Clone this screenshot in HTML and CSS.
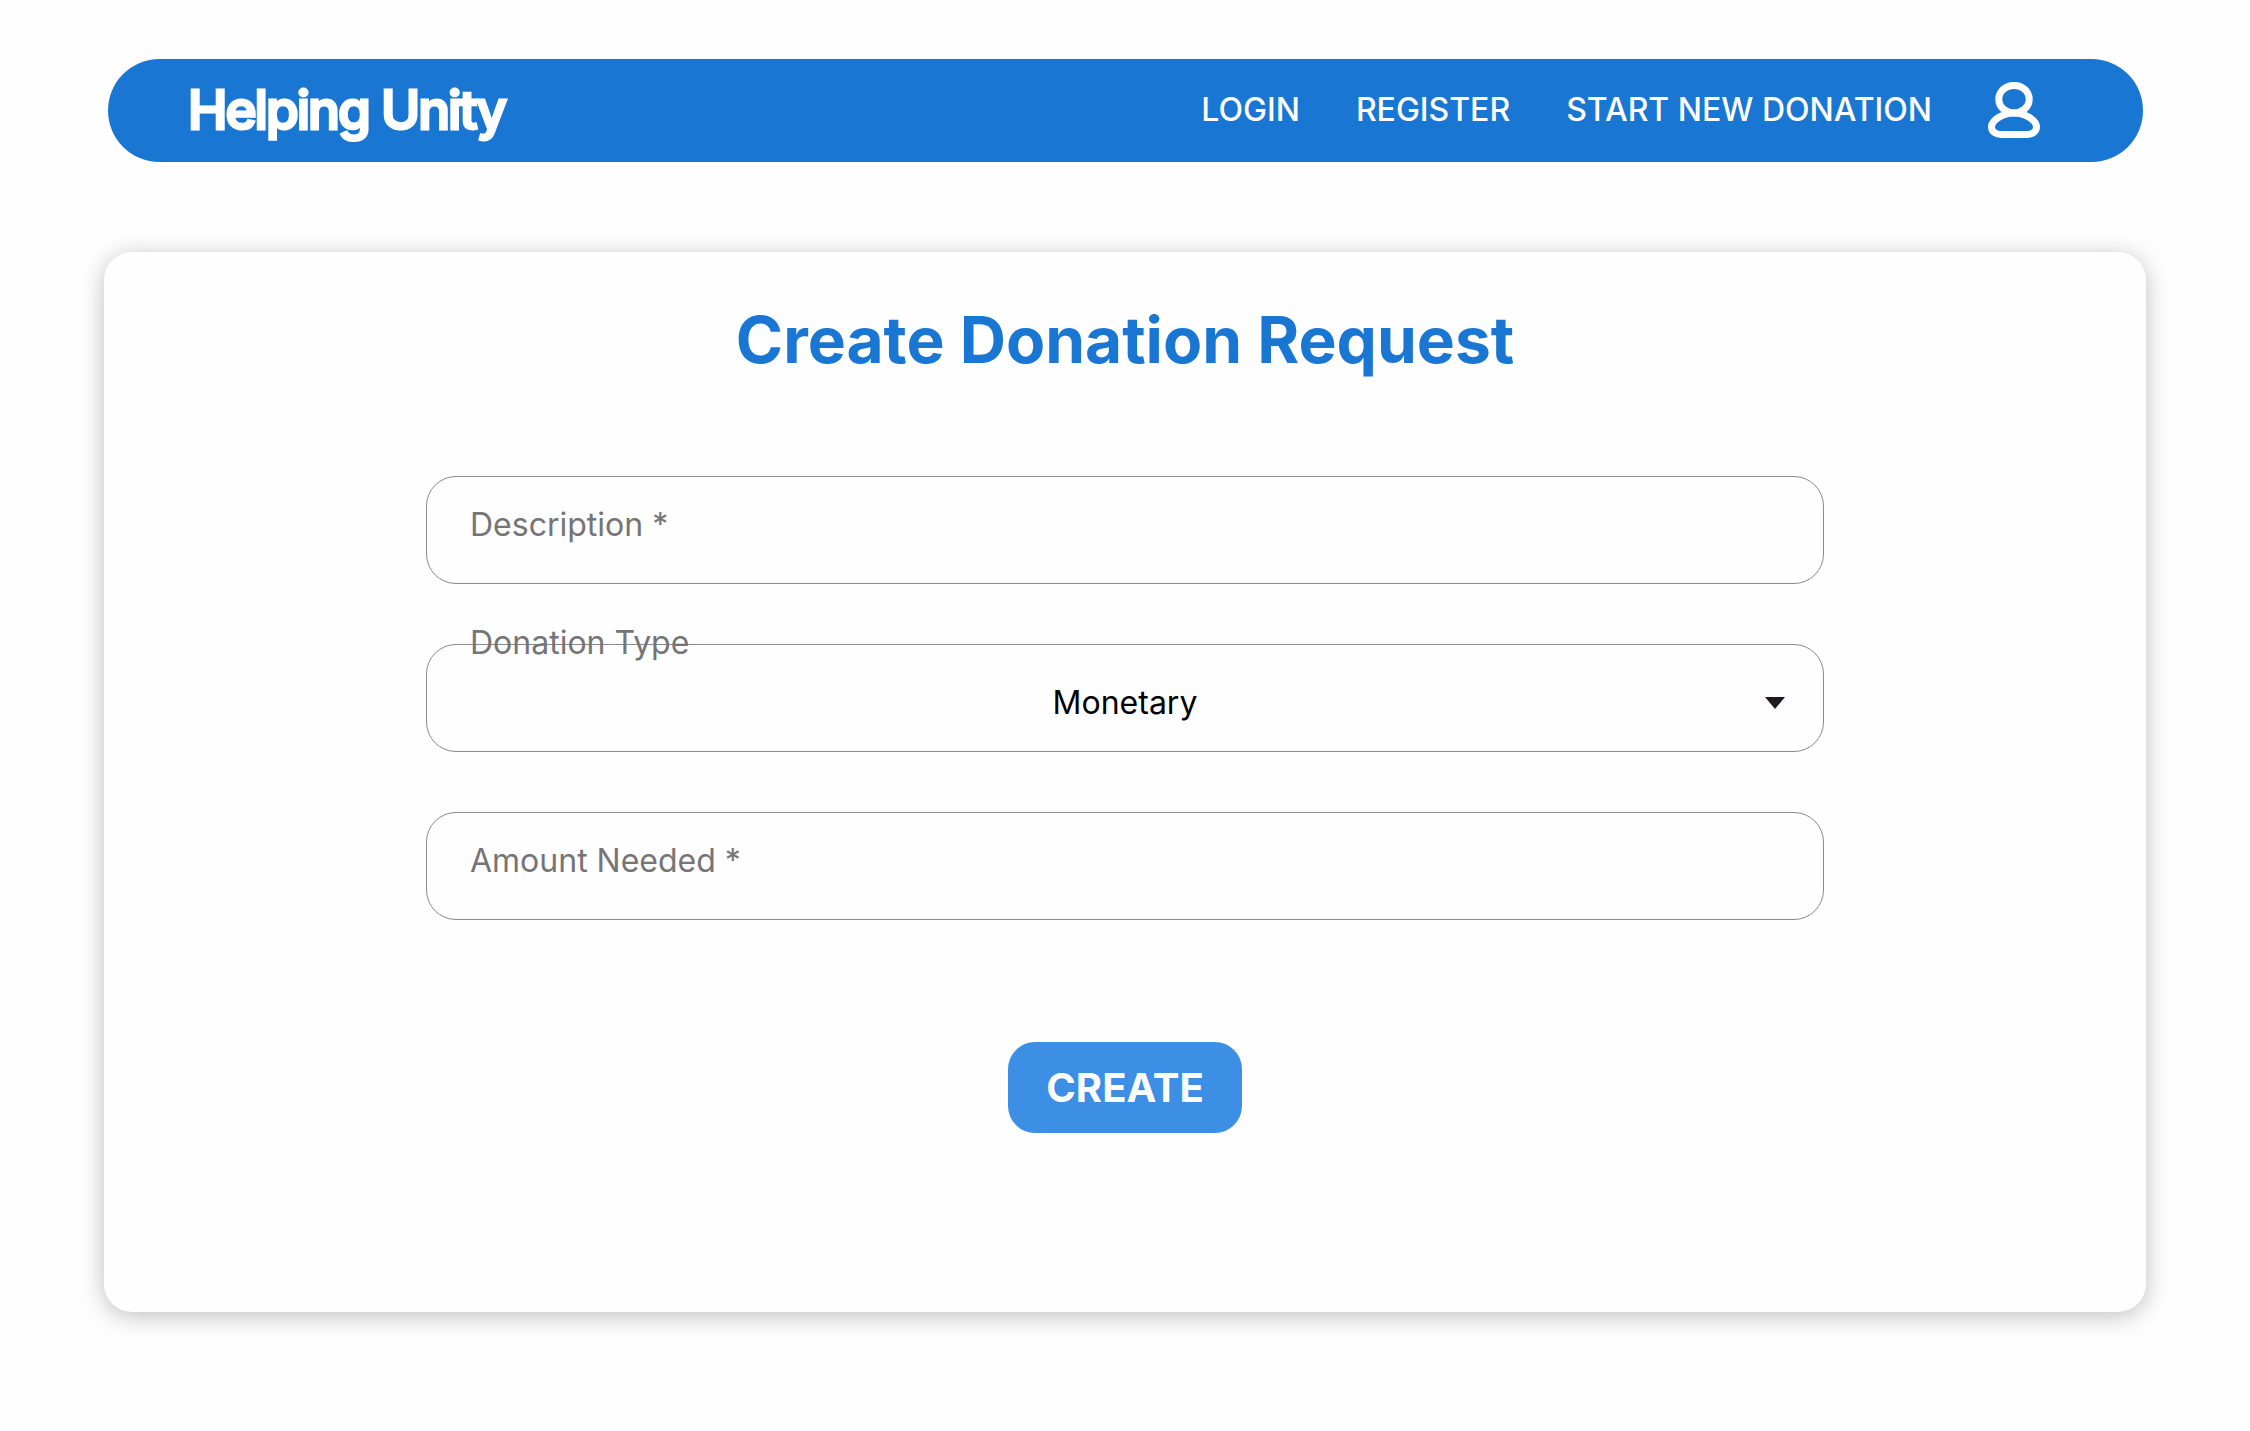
FILE: index.html
```html
<!DOCTYPE html>
<html lang="en">
<head>
  <meta charset="utf-8">
  <meta name="viewport" content="width=device-width, initial-scale=1">
  <title>Helping Unity</title>
  <link rel="stylesheet" href="styles.css">
</head>
<body>
  <header class="topbar">
    <a class="brand" href="#">Helping Unity</a>
    <nav class="nav">
      <a href="#">LOGIN</a>
      <a href="#">REGISTER</a>
      <a href="#">START NEW DONATION</a>
      <a class="profile" href="#" aria-label="Profile">
        <svg width="52" height="56" viewBox="0 0 52 56" fill="none" stroke="currentColor" stroke-width="7" aria-hidden="true">
          <ellipse cx="26" cy="17.2" rx="15.2" ry="13.8"/>
          <path d="M26 31C14.500 31 3.500 38.500 3.500 45C3.500 49.500 8 52.500 13 52.500H39C44 52.500 48.500 49.500 48.500 45C48.500 38.500 37.500 31 26 31Z"/>
        </svg>
      </a>
    </nav>
  </header>
  <main class="card">
    <h1 class="title">Create Donation Request</h1>
    <form class="form">
      <div class="field">
        <input class="control" type="text" placeholder="Description *" aria-label="Description" required>
      </div>
      <div class="field">
        <label class="label" for="type">Donation Type</label>
        <select class="control select" id="type">
          <option>Monetary</option>
        </select>
        <svg class="arrow" width="20" height="12" viewBox="0 0 20 12" aria-hidden="true"><path d="M0 0H20L10 12Z" fill="#1d1b20"/></svg>
      </div>
      <div class="field">
        <input class="control" type="text" placeholder="Amount Needed *" aria-label="Amount needed" required>
      </div>
      <button class="submit" type="submit">CREATE</button>
    </form>
  </main>
</body>
</html>
```
FILE: styles.css
```css
* {
  box-sizing: border-box;
}

body {
  margin: 0;
  padding: 59px 104px 80px;
  background: #fefefe;
  font-family: Inter, "Liberation Sans", sans-serif;
  font-size: 32px;
}

.topbar {
  display: flex;
  align-items: center;
  justify-content: space-between;
  margin: 0 3px 90px 4px;
  padding: 0 103px 2px 80px;
  height: 103px;
  border-radius: 52px;
  background: #1976d3;
  color: #fff;
}

.topbar a {
  color: inherit;
  text-decoration: none;
}

.brand {
  font-size: 53px;
  font-weight: 500;
  letter-spacing: -2px;
  -webkit-text-stroke: 3px #fff;
}

.nav {
  display: flex;
  align-items: center;
  gap: 56px;
  font-weight: 500;
}

.profile svg {
  display: block;
}

.card {
  padding: 48px 24px 179px;
  border-radius: 28px;
  background: #fefefe;
  box-shadow: 0 4px 24px rgba(0, 0, 0, 0.25);
}

.title {
  margin: 0 0 96px;
  color: #1976d3;
  font-size: 64px;
  font-weight: 700;
  line-height: 80px;
  text-align: center;
}

.form {
  display: flex;
  flex-direction: column;
  align-items: center;
  gap: 60px;
}

.field {
  position: relative;
  width: 100%;
  max-width: 1398px;
}

.control {
  display: block;
  width: 100%;
  height: 108px;
  padding: 0 43px 12px;
  border: 1px solid #8a8a8a;
  border-radius: 30px;
  background: transparent;
  color: #000;
  font: inherit;
}

.control::placeholder {
  color: #757575;
  opacity: 1;
}

.select {
  appearance: none;
  padding: 8px 43px 0;
  text-align-last: center;
}

.label {
  position: absolute;
  top: -21px;
  left: 44px;
  color: #757575;
  line-height: 40px;
}

.arrow {
  position: absolute;
  top: 53px;
  right: 39px;
  pointer-events: none;
}

.submit {
  margin-top: 62px;
  padding: 0 38px;
  height: 91px;
  border: 0;
  border-radius: 27px;
  background: #3c8fe5;
  color: #fff;
  font: inherit;
  font-size: 40px;
  font-weight: 700;
}
```
